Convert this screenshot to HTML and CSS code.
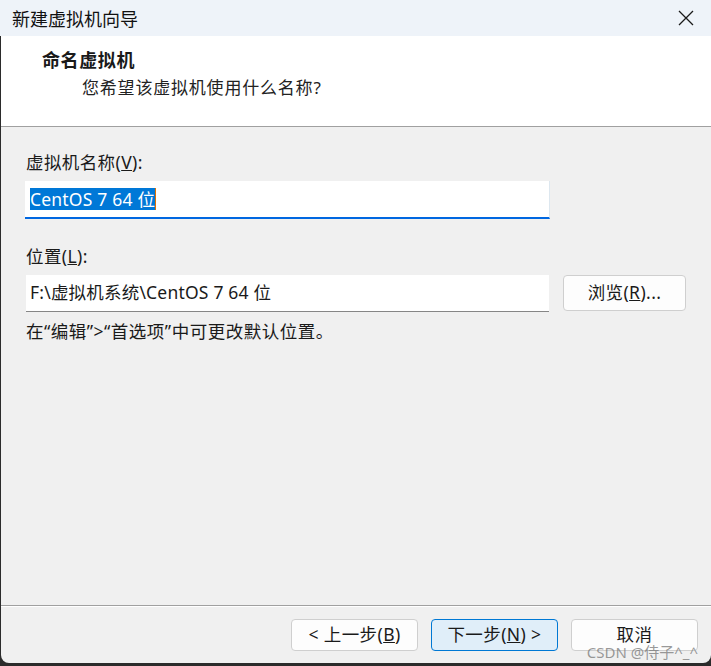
FILE: index.html
```html
<!DOCTYPE html>
<html lang="zh-CN">
<head>
<meta charset="utf-8">
<title>新建虚拟机向导</title>
<link rel="stylesheet" href="styles.css">
</head>
<body>
<div class="screen">
  <div class="titlebar">
    <span class="title">新建虚拟机向导</span>
    <span class="close" aria-label="关闭">
      <svg width="16" height="16" viewBox="0 0 16 16"><path d="M1 1 L15 15 M15 1 L1 15" stroke="#1a1a1a" stroke-width="1.3" fill="none"/></svg>
    </span>
  </div>
  <div class="main">
    <div class="header">
      <div class="h-title">命名虚拟机</div>
      <div class="h-sub">您希望该虚拟机使用什么名称?</div>
    </div>
    <div class="content">
      <div class="label">虚拟机名称(<u>V</u>):</div>
      <div class="input focused"><span class="sel">CentOS 7 64 位</span><span class="caret"></span></div>
      <div class="label label2">位置(<u>L</u>):</div>
      <div class="row">
        <div class="input path">F:\虚拟机系统\CentOS 7 64 位</div>
        <button class="btn browse">浏览(<u>R</u>)...</button>
      </div>
      <div class="hint">在“编辑”&gt;“首选项”中可更改默认位置。</div>
    </div>
    <div class="footer">
      <button class="btn nav">&lt; 上一步(<u>B</u>)</button>
      <button class="btn nav primary">下一步(<u>N</u>) &gt;</button>
      <button class="btn nav">取消</button>
      <span class="watermark">CSDN @侍子^_^</span>
    </div>
  </div>
</div>
</body>
</html>
```
FILE: styles.css
```css
* { box-sizing: border-box; }
html, body { margin: 0; padding: 0; }
body {
  width: 711px;
  height: 666px;
  overflow: hidden;
  font-family: "Noto Sans", "Noto Sans CJK SC", sans-serif;
  font-size: 17.5px;
  color: #1a1a1a;
}
.screen {
  width: 711px;
  height: 666px;
  background: #2b2b2b;
  display: flex;
  flex-direction: column;
}
.titlebar {
  height: 36px;
  background: #eef3f9;
  display: flex;
  align-items: center;
  justify-content: space-between;
  padding: 0 17px 0 12px;
  flex: none;
}
.title { font-size: 18px; color: #111; }
.close { display: flex; width: 16px; height: 16px; }
.main {
  margin-left: 1px;
  height: 627px;
  background: #f0f0f0;
  border-radius: 0 0 8px 8px;
  display: flex;
  flex-direction: column;
  flex: none;
}
.header {
  height: 91px;
  background: #fff;
  border-bottom: 1px solid #a0a0a0;
  padding: 12px 0 0 41px;
  flex: none;
}
.h-title { font-weight: bold; font-size: 18px; line-height: 24px; letter-spacing: 0.6px; }
.h-sub { margin: 4px 0 0 40px; font-size: 17px; line-height: 24px; color: #222; letter-spacing: 0.8px; }
.content {
  flex: 1;
  padding: 23px 0 0 24px;
}
.label { line-height: 24px; padding-left: 1px; letter-spacing: 0.4px; }
.label2 { margin-top: 25px; }
.input {
  background: #fff;
  width: 525px;
  display: flex;
  align-items: center;
  letter-spacing: 0.2px;
}
.focused {
  margin-top: 7px;
  height: 38px;
  border-bottom: 2px solid #0067e0;
  border-right: 1px solid #dde7ef;
  padding-left: 5px;
}
.sel {
  background: #0078d7;
  color: #fff;
  line-height: 22px;
  padding: 0;
}
.caret { width: 1px; height: 22px; background: #e07000; }
.row { display: flex; margin-top: 7px; align-items: flex-start; }
.path {
  height: 37px;
  border-bottom: 1px solid #868686;
  margin-left: 1px;
  width: 523px;
  padding-left: 4px;
  padding-bottom: 4px;
}
.btn {
  font-family: inherit;
  font-size: 17.5px;
  letter-spacing: 0.4px;
  color: #1a1a1a;
  background: #fdfdfd;
  border: 1px solid #cfcfcf;
  border-radius: 4px;
  padding: 0;
  line-height: 1;
}
.browse {
  margin-left: 14px;
  width: 123px;
  height: 36px;
}
.hint { margin-top: 7px; line-height: 24px; padding-left: 1px; letter-spacing: 0.5px; }
.footer {
  height: 58px;
  border-top: 1px solid #a0a0a0;
  box-shadow: inset 0 1px 0 #fff;
  display: flex;
  justify-content: flex-end;
  align-items: flex-start;
  gap: 13px;
  padding: 13px 13px 0 0;
  position: relative;
  flex: none;
}
.nav { width: 127px; height: 32px; }
.primary { background: #e0eef9; border-color: #0078d4; }
.watermark {
  position: absolute;
  right: 13px;
  top: 35px;
  font-size: 15px;
  color: rgba(120, 120, 120, 0.75);
  pointer-events: none;
}
```
